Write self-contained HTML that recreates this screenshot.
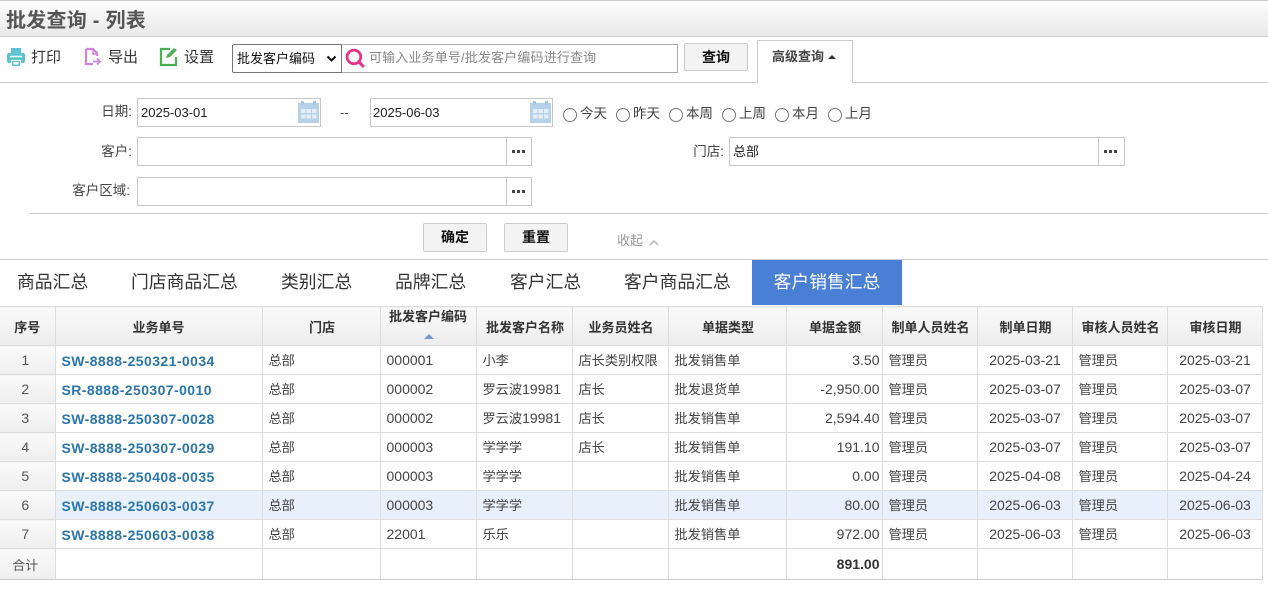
<!DOCTYPE html>
<html lang="zh-CN">
<head>
<meta charset="utf-8">
<title>批发查询 - 列表</title>
<style>
*{box-sizing:border-box}
html,body{margin:0;padding:0;width:1268px;height:593px;overflow:hidden;background:#fff}
body{position:relative;font-family:"Liberation Sans","Noto Sans CJK SC",sans-serif;font-size:13px;color:#333}
.a{position:absolute;white-space:nowrap}
.line{position:absolute;height:1px;background:#ccc}
.box{position:absolute;border:1px solid #c8c8c8;background:#fff;height:29px;line-height:27px;padding-left:3px;font-size:13px;color:#222}
.more{position:absolute;border:1px solid #c8c8c8;background:#fff;height:29px;width:26px}
.more:after{content:"";position:absolute;left:5px;top:12px;width:3px;height:3px;background:#444;box-shadow:5px 0 #444,10px 0 #444}
.btn{position:absolute;border:1px solid #ccc;border-radius:2px;background:#f3f3f3;font-weight:bold;font-size:14px;color:#111;text-align:center}
.lab{position:absolute;text-align:right;font-size:13.500px;color:#444;white-space:nowrap}
.rad{position:absolute;width:14px;height:14px;border:1px solid #777;border-radius:50%;background:#fff;top:108px}
.radt{position:absolute;top:105px;font-size:13.500px;line-height:18px;color:#444;white-space:nowrap}
.tab{position:absolute;top:261px;height:44px;line-height:43px;font-size:17.800px;color:#333;text-align:center;white-space:nowrap}
table{position:absolute;left:0;top:306px;width:1262px;border-collapse:collapse;table-layout:fixed;border-top:1px solid #d4d4d4}
th,td{border:1px solid #ddd;padding:0;overflow:hidden;white-space:nowrap}
tr>*:first-child{border-left:0}
th{height:39px;background:linear-gradient(#fafafa,#ececec);font-size:13px;font-weight:bold;color:#333;text-align:center}
th.s{padding-left:2px}
td{height:29px;font-size:13.200px;color:#444;padding:0 0 2px 6px}
td.n{background:linear-gradient(#fafafa,#eeeeee);text-align:center;padding:0 4px 0 0;font-size:14px;color:#555}
td.id{font-size:14px;font-weight:bold;color:#2a76ad;letter-spacing:.42px;padding:1px 0 0 6px}
td.num{font-size:14px;padding:0 0 1px 6px}
td.r{text-align:right;padding:0 2px 0 0;font-size:14px}
td.c{text-align:center;padding:0 0 0 1px;font-size:14px}
td span{font-size:14px}
tr.hl td:not(.n){background:#e8f0fc}
tr.tot td{height:31px;border-bottom:1px solid #ccc}
</style>
</head>
<body>
<!-- title bar -->
<div class="a" style="left:0;top:0;width:1268px;height:37px;background:linear-gradient(#fdfdfd,#e9e9e9);border-top:1px solid #ccc;border-bottom:1px solid #ccc"></div>
<div class="a" style="left:6px;top:7px;font-size:20px;line-height:28px;font-weight:bold;color:#555;letter-spacing:.25px">批发查询 - 列表</div>

<!-- toolbar -->
<svg class="a" style="left:6px;top:47px" width="20" height="20" viewBox="0 0 20 20">
<path d="M5 1h10v5H5z" fill="#5cc3d3"/>
<path d="M3 6h14a2 2 0 0 1 2 2v6a2 2 0 0 1-2 2h-2v-3H5v3H3a2 2 0 0 1-2-2V8a2 2 0 0 1 2-2z" fill="#5cc3d3"/>
<path d="M6 14h8v5H6z" fill="#5cc3d3"/><path d="M4 9.500h12" stroke="#fff" stroke-width="1.500"/>
<path d="M7.500 15h5v2.500h-5z" fill="#fff"/>
</svg>
<div class="a" style="left:31px;top:48px;font-size:15px;line-height:19px;color:#333">打印</div>
<svg class="a" style="left:84px;top:47px" width="18" height="20" viewBox="0 0 18 20" fill="none">
<path d="M2 2h7l4 4v3M2 2v15h7" stroke="#cf85e0" stroke-width="2.200"/>
<path d="M9 1v6h5" stroke="#cf85e0" stroke-width="1.500"/>
<path d="M9 14.500h7M13 11.500l3 3-3 3" stroke="#cf85e0" stroke-width="1.800"/>
</svg>
<div class="a" style="left:108px;top:48px;font-size:15px;line-height:19px;color:#333">导出</div>
<svg class="a" style="left:159px;top:46px" width="20" height="21" viewBox="0 0 20 21" fill="none">
<path d="M11 3H2v16h15v-8" stroke="#4cb050" stroke-width="2.200"/>
<path d="M7 12l1-3 7-7 3 2-7 7z" fill="#4cb050"/>
</svg>
<div class="a" style="left:184px;top:48px;font-size:15px;line-height:19px;color:#333">设置</div>

<div class="a" style="left:232px;top:44px;width:110px;height:29px;border:1px solid #767676;border-radius:2px 0 0 2px;background:#fff;font-size:13px;line-height:28px;padding-left:4px;color:#111">批发客户编码</div>
<svg class="a" style="left:326px;top:55px" width="11" height="8" viewBox="0 0 11 8" fill="none"><path d="M1.500 1.500l4 4 4-4" stroke="#111" stroke-width="2"/></svg>
<div class="a" style="left:342px;top:44px;width:336px;height:29px;border:1px solid #aaa;border-left:0;background:#fff"></div>
<svg class="a" style="left:345px;top:48px" width="21" height="21" viewBox="0 0 20 20" fill="none">
<circle cx="8.500" cy="8.500" r="6.500" stroke="#e6308a" stroke-width="2.600"/><path d="M13 13l5 5" stroke="#e6308a" stroke-width="2.800"/>
</svg>
<div class="a" style="left:369px;top:49px;font-size:13px;line-height:18px;color:#888;letter-spacing:.15px">可输入业务单号/批发客户编码进行查询</div>
<div class="btn" style="left:684px;top:43px;width:64px;height:28px;line-height:26px">查询</div>

<div class="line" style="left:0;top:82px;width:1268px"></div>
<div class="a" style="left:757px;top:40px;width:96px;height:43px;border:1px solid #ccc;border-bottom:0;background:#fff"></div>
<div class="a" style="left:772px;top:47px;font-size:13px;line-height:20px;font-weight:bold;color:#444">高级查询</div>
<div class="a" style="left:828px;top:55px;width:0;height:0;border:4px solid transparent;border-top:0;border-bottom:4px solid #333"></div>

<!-- filter -->
<div class="lab" style="left:60px;top:103px;width:72px;line-height:18px">日期:</div>
<div class="box" style="left:137px;top:98px;width:184px">2025-03-01</div>
<svg class="a" style="left:297px;top:100px" width="23" height="24" viewBox="0 0 23 24">
<path d="M1 3h21v20H1z" fill="#b5d2ea"/><path d="M4 1h3v4H4zM16 1h3v4h-3z" fill="#a6c7e3"/>
<path d="M4 9h4.500v4H4zM9.500 9H14v4H9.500zM15 9h4.500v4H15zM4 14.500h4.500v4H4zM9.500 14.500H14v4H9.500zM15 14.500h4.500v4H15z" fill="#e3eef7"/>
</svg>
<div class="a" style="left:340px;top:104px;line-height:18px;color:#444">--</div>
<div class="box" style="left:370px;top:98px;width:183px;padding-left:2px">2025-06-03</div>
<svg class="a" style="left:529px;top:100px" width="23" height="24" viewBox="0 0 23 24">
<path d="M1 3h21v20H1z" fill="#b5d2ea"/><path d="M4 1h3v4H4zM16 1h3v4h-3z" fill="#a6c7e3"/>
<path d="M4 9h4.500v4H4zM9.500 9H14v4H9.500zM15 9h4.500v4H15zM4 14.500h4.500v4H4zM9.500 14.500H14v4H9.500zM15 14.500h4.500v4H15z" fill="#e3eef7"/>
</svg>
<div class="rad" style="left:563px"></div><div class="radt" style="left:580px">今天</div>
<div class="rad" style="left:616px"></div><div class="radt" style="left:633px">昨天</div>
<div class="rad" style="left:669px"></div><div class="radt" style="left:686px">本周</div>
<div class="rad" style="left:722px"></div><div class="radt" style="left:739px">上周</div>
<div class="rad" style="left:775px"></div><div class="radt" style="left:792px">本月</div>
<div class="rad" style="left:828px"></div><div class="radt" style="left:845px">上月</div>

<div class="lab" style="left:60px;top:143px;width:72px;line-height:18px">客户:</div>
<div class="box" style="left:137px;top:137px;width:370px"></div>
<div class="more" style="left:506px;top:137px"></div>
<div class="lab" style="left:650px;top:143px;width:74px;line-height:18px">门店:</div>
<div class="box" style="left:729px;top:137px;width:370px">总部</div>
<div class="more" style="left:1098px;top:137px;width:27px"></div>
<div class="lab" style="left:58px;top:182px;width:72px;line-height:18px">客户区域:</div>
<div class="box" style="left:137px;top:177px;width:370px"></div>
<div class="more" style="left:506px;top:177px"></div>

<div class="line" style="left:30px;top:213px;width:1238px"></div>
<div class="btn" style="left:423px;top:223px;width:64px;height:29px;line-height:27px">确定</div>
<div class="btn" style="left:504px;top:223px;width:64px;height:29px;line-height:27px">重置</div>
<div class="a" style="left:617px;top:232px;font-size:13px;line-height:18px;color:#999">收起</div>
<svg class="a" style="left:649px;top:239px" width="10" height="7" viewBox="0 0 10 7" fill="none"><path d="M1 6l4-4 4 4" stroke="#bbb" stroke-width="1.600"/></svg>

<div class="line" style="left:0;top:259px;width:1268px"></div>

<!-- tabs -->
<div class="tab" style="left:17px">商品汇总</div>
<div class="tab" style="left:131px">门店商品汇总</div>
<div class="tab" style="left:281px">类别汇总</div>
<div class="tab" style="left:395px">品牌汇总</div>
<div class="tab" style="left:510px">客户汇总</div>
<div class="tab" style="left:624px">客户商品汇总</div>
<div class="tab" style="left:752px;top:260px;height:45px;line-height:45px;width:150px;background:#4a7fd6;color:#fff">客户销售汇总</div>

<!-- grid -->
<table>
<colgroup>
<col style="width:55px"><col style="width:207px"><col style="width:118px"><col style="width:96px"><col style="width:96px"><col style="width:96px"><col style="width:118px"><col style="width:96px"><col style="width:95px"><col style="width:95px"><col style="width:95px"><col style="width:95px">
</colgroup>
<tr>
<th>序号</th><th>业务单号</th><th class="s">门店</th>
<th style="position:relative;vertical-align:top;padding-top:1px;line-height:18px">批发客户编码<span style="position:absolute;left:43px;top:27px;width:0;height:0;border:5px solid transparent;border-top:0;border-bottom:5px solid #6f9ad0"></span></th>
<th class="s">批发客户名称</th><th class="s">业务员姓名</th><th class="s">单据类型</th><th class="s">单据金额</th><th class="s">制单人员姓名</th><th class="s">制单日期</th><th class="s">审核人员姓名</th><th class="s">审核日期</th>
</tr>
<tr><td class="n">1</td><td class="id">SW-8888-250321-0034</td><td>总部</td><td class="num">000001</td><td>小李</td><td>店长类别权限</td><td>批发销售单</td><td class="r">3.50</td><td>管理员</td><td class="c">2025-03-21</td><td>管理员</td><td class="c">2025-03-21</td></tr>
<tr><td class="n">2</td><td class="id">SR-8888-250307-0010</td><td>总部</td><td class="num">000002</td><td>罗云波<span>19981</span></td><td>店长</td><td>批发退货单</td><td class="r">-2,950.00</td><td>管理员</td><td class="c">2025-03-07</td><td>管理员</td><td class="c">2025-03-07</td></tr>
<tr><td class="n">3</td><td class="id">SW-8888-250307-0028</td><td>总部</td><td class="num">000002</td><td>罗云波<span>19981</span></td><td>店长</td><td>批发销售单</td><td class="r">2,594.40</td><td>管理员</td><td class="c">2025-03-07</td><td>管理员</td><td class="c">2025-03-07</td></tr>
<tr><td class="n">4</td><td class="id">SW-8888-250307-0029</td><td>总部</td><td class="num">000003</td><td>学学学</td><td>店长</td><td>批发销售单</td><td class="r">191.10</td><td>管理员</td><td class="c">2025-03-07</td><td>管理员</td><td class="c">2025-03-07</td></tr>
<tr><td class="n">5</td><td class="id">SW-8888-250408-0035</td><td>总部</td><td class="num">000003</td><td>学学学</td><td></td><td>批发销售单</td><td class="r">0.00</td><td>管理员</td><td class="c">2025-04-08</td><td>管理员</td><td class="c">2025-04-24</td></tr>
<tr class="hl"><td class="n">6</td><td class="id">SW-8888-250603-0037</td><td>总部</td><td class="num">000003</td><td>学学学</td><td></td><td>批发销售单</td><td class="r">80.00</td><td>管理员</td><td class="c">2025-06-03</td><td>管理员</td><td class="c">2025-06-03</td></tr>
<tr><td class="n">7</td><td class="id">SW-8888-250603-0038</td><td>总部</td><td class="num">22001</td><td>乐乐</td><td></td><td>批发销售单</td><td class="r">972.00</td><td>管理员</td><td class="c">2025-06-03</td><td>管理员</td><td class="c">2025-06-03</td></tr>
<tr class="tot"><td class="n" style="font-size:13px">合计</td><td></td><td></td><td></td><td></td><td></td><td></td><td class="r" style="font-weight:bold;color:#333">891.00</td><td></td><td></td><td></td><td></td></tr>
</table>
</body>
</html>
